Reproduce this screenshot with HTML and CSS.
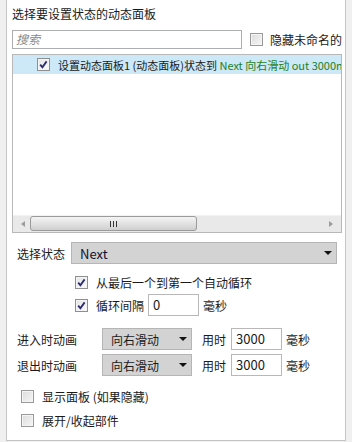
FILE: index.html
```html
<!DOCTYPE html>
<html>
<head>
<meta charset="utf-8">
<link rel="stylesheet" href="styles.css">
</head>
<body>
<div class="panel">
  <div class="title">选择要设置状态的动态面板</div>
  <div class="search-row">
    <div class="search"><span class="ph">搜索</span></div>
    <label class="cb-label hide-unnamed"><span class="cb"></span><span>隐藏未命名的</span></label>
  </div>
  <div class="list">
    <div class="list-body">
      <div class="item">
        <span class="cb checked"><svg viewBox="0 0 13 13" width="13" height="13"><path d="M3.2 6.6 L5.4 9.2 L9.6 3.4" fill="none" stroke="#2a2a6e" stroke-width="1.8"/></svg></span>
        <span class="item-text">设置动态面板1 (动态面板)状态到 <span class="green">Next 向右滑动 out 3000ms</span></span>
      </div>
    </div>
    <div class="hscroll">
      <span class="arrow-l"></span>
      <div class="track">
        <div class="thumb"><span class="grip"><i></i><i></i><i></i></span></div>
      </div>
      <span class="arrow-r"></span>
    </div>
  </div>
  <div class="state-row">
    <span class="lbl">选择状态</span>
    <div class="select wide"><span class="val">Next</span><span class="caret"></span></div>
  </div>
  <div class="cb-row first">
    <span class="cb checked"><svg viewBox="0 0 13 13" width="13" height="13"><path d="M3.2 6.6 L5.4 9.2 L9.6 3.4" fill="none" stroke="#2a2a6e" stroke-width="1.8"/></svg></span>
    <span>从最后一个到第一个自动循环</span>
  </div>
  <div class="cb-row second">
    <span class="cb checked"><svg viewBox="0 0 13 13" width="13" height="13"><path d="M3.2 6.6 L5.4 9.2 L9.6 3.4" fill="none" stroke="#2a2a6e" stroke-width="1.8"/></svg></span>
    <span>循环间隔</span>
    <div class="num interval">0</div>
    <span>毫秒</span>
  </div>
  <div class="anim-row in">
    <span class="lbl">进入时动画</span>
    <div class="select small"><span class="val">向右滑动</span><span class="caret"></span></div>
    <span class="use">用时</span>
    <div class="num dur">3000</div>
    <span>毫秒</span>
  </div>
  <div class="anim-row out">
    <span class="lbl">退出时动画</span>
    <div class="select small"><span class="val">向右滑动</span><span class="caret"></span></div>
    <span class="use">用时</span>
    <div class="num dur">3000</div>
    <span>毫秒</span>
  </div>
  <div class="cb-row bottom b1">
    <span class="cb"></span>
    <span>显示面板 (如果隐藏)</span>
  </div>
  <div class="cb-row bottom b2">
    <span class="cb"></span>
    <span>展开/收起部件</span>
  </div>
</div>
</body>
</html>
```
FILE: styles.css
```css
* { box-sizing: border-box; }
html, body { margin: 0; padding: 0; }
body {
  background: #f0f0f0;
  width: 352px;
  height: 442px;
  overflow: hidden;
  font-family: "Noto Sans CJK SC", "Noto Sans", sans-serif;
  font-size: 12px;
  color: #1a1a1a;
}
.panel {
  margin-left: 6px;
  width: 340px;
  height: 441px;
  background: #fff;
  border-left: 1px solid #c4c4c4;
  border-right: 1px solid #c4c4c4;
  border-bottom: 1px solid #c4c4c4;
  padding: 6px 0 0 5px;
}
.title {
  height: 16px;
  line-height: 16px;
}
.search-row {
  margin-top: 8px;
  display: flex;
  align-items: center;
  height: 19px;
}
.search {
  width: 230px;
  height: 19px;
  border: 1px solid #abadb3;
  padding-left: 3px;
  line-height: 16px;
}
.ph {
  color: #8a8a8a;
  font-style: italic;
}
.cb-label {
  display: flex;
  align-items: center;
}
.hide-unnamed {
  margin-left: 8px;
}
.hide-unnamed .cb { margin-right: 7px; }
.cb {
  width: 13px;
  height: 13px;
  border: 1px solid #9a9a9a;
  background: linear-gradient(135deg, #dcdcdc, #f6f6f6);
  box-shadow: inset 0 0 0 1px #f4f4f4;
  display: inline-block;
  flex: none;
  position: relative;
}
.cb.checked {
  background: linear-gradient(135deg, #e4e4e4, #fbfbfb);
  border-color: #8e8f8f;
}
.cb svg {
  position: absolute;
  left: -1px;
  top: -1px;
}
.list {
  margin-top: 5px;
  width: 330px;
  height: 179px;
  border: 1px solid #b8b8b8;
  display: flex;
  flex-direction: column;
}
.list-body {
  flex: 1;
  overflow: hidden;
}
.item {
  height: 19px;
  background: #cde8f6;
  display: flex;
  align-items: center;
  padding-left: 24px;
  white-space: nowrap;
  overflow: hidden;
}
.item .cb { margin-right: 8px; }
.item-text { line-height: 16px; font-size: 11px; }
.green { color: #1f7f1f; }
.hscroll {
  height: 17px;
  background: #e9e9e9;
  display: flex;
  align-items: center;
  border-top: 1px solid #f2f2f2;
}
.arrow-l, .arrow-r {
  width: 0; height: 0;
  border-top: 3px solid transparent;
  border-bottom: 3px solid transparent;
}
.arrow-l {
  border-right: 4px solid #9c9c9c;
  margin-left: 8px;
  margin-right: 5px;
}
.arrow-r {
  border-left: 4px solid #9c9c9c;
  margin-left: auto;
  margin-right: 8px;
}
.track {
  height: 15px;
  width: 168px;
  align-self: flex-start;
}
.thumb {
  width: 167px;
  height: 15px;
  border: 1px solid #9a9a9a;
  border-radius: 3px;
  background: linear-gradient(#f4f4f4, #e2e2e2 50%, #cfcfcf);
  display: flex;
  align-items: center;
  justify-content: center;
}
.grip { display: flex; gap: 1px; }
.grip i {
  width: 1px;
  height: 6px;
  background: #333;
  display: block;
  margin: 0 0.5px;
}
.state-row {
  margin-top: 9px;
  height: 22px;
  display: flex;
  align-items: center;
}
.lbl {
  margin-left: 5px;
}
.select {
  height: 22px;
  background: #d3d3d3;
  border: 1px solid #b5b5b5;
  display: flex;
  align-items: center;
  position: relative;
}
.select.wide {
  margin-left: 6px;
  width: 266px;
  padding-left: 8px;
}
.select .val { color: #101030; font-size: 13px; }
.select.small .val { font-size: 12px; color: #1a1a1a; }
.caret {
  width: 0; height: 0;
  border-left: 4px solid transparent;
  border-right: 4px solid transparent;
  border-top: 4px solid #111;
  margin-left: auto;
  margin-right: 4px;
}
.cb-row {
  display: flex;
  align-items: center;
}
.cb-row.first {
  margin-top: 10px;
  height: 16px;
  padding-left: 63px;
}
.cb-row .cb { margin-right: 8px; }
.cb-row.second {
  margin-top: 4px;
  height: 22px;
  padding-left: 63px;
}
.num {
  height: 22px;
  border: 1px solid #b8b8b8;
  padding-left: 4px;
  line-height: 20px;
  font-size: 13px;
}
.interval {
  width: 51px;
  margin-left: 4px;
  margin-right: 4px;
}
.anim-row {
  height: 22px;
  display: flex;
  align-items: center;
}
.anim-row.in { margin-top: 12px; }
.anim-row.out { margin-top: 4px; }
.select.small {
  margin-left: 25px;
  width: 90px;
  padding-left: 8px;
}
.use { margin-left: 10px; }
.dur {
  width: 51px;
  margin-left: 5px;
  margin-right: 4px;
}
.cb-row.bottom {
  height: 16px;
  padding-left: 9px;
}
.b1 { margin-top: 12px; }
.b2 { margin-top: 8px; }
```
